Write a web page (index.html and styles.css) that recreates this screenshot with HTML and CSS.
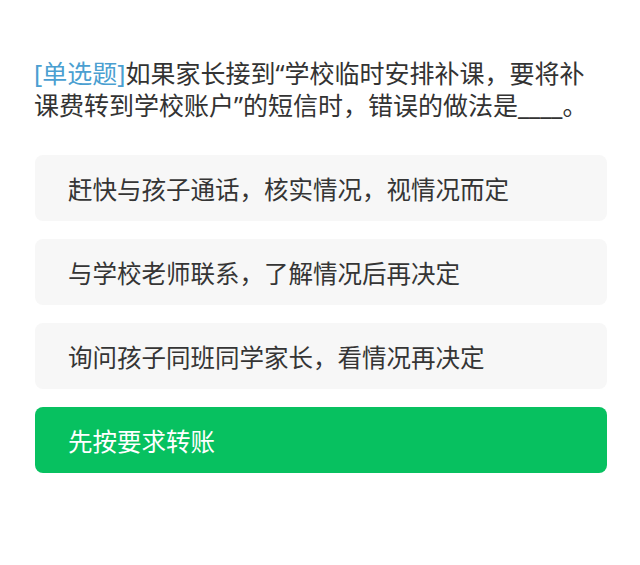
FILE: index.html
```html
<!DOCTYPE html>
<html lang="zh-CN">

<head>
    <meta charset="UTF-8">
    <meta name="viewport" content="width=device-width, initial-scale=1.0">
    <title>单选题</title>
    <link rel="stylesheet" href="styles.css">
</head>

<body>
    <div class="quiz">
        <p class="question"><span class="tag">[单选题]</span>如果家长接到“学校临时安排补课，要将补课费转到学校账户”的短信时，错误的做法是____。</p>
        <ul class="options">
            <li class="option">赶快与孩子通话，核实情况，视情况而定</li>
            <li class="option">与学校老师联系，了解情况后再决定</li>
            <li class="option">询问孩子同班同学家长，看情况再决定</li>
            <li class="option selected">先按要求转账</li>
        </ul>
    </div>
</body>

</html>
```

FILE: styles.css
```css
body {
    font-family: "Noto Sans", "Noto Sans CJK SC", sans-serif;
    margin: 0;
    padding: 0;
    background-color: #fff;
    color: #333;
}

.quiz {
    padding: 57px 33px 0 34px;
}

.question {
    margin: 0 0 34px 0;
    padding-right: 3px;
    font-size: 25px;
    line-height: 32px;
}

.tag {
    color: #4b9fd1;
}

.options {
    list-style: none;
    margin: 0;
    padding: 0 0 0 1px;
    display: flex;
    flex-direction: column;
    gap: 18px;
}

.option {
    height: 66px;
    padding-left: 33px;
    display: flex;
    align-items: center;
    background-color: #f7f7f7;
    border-radius: 8px;
    font-size: 24.5px;
    color: #353535;
}

.option.selected {
    background-color: #07c160;
    color: #fff;
}
```
